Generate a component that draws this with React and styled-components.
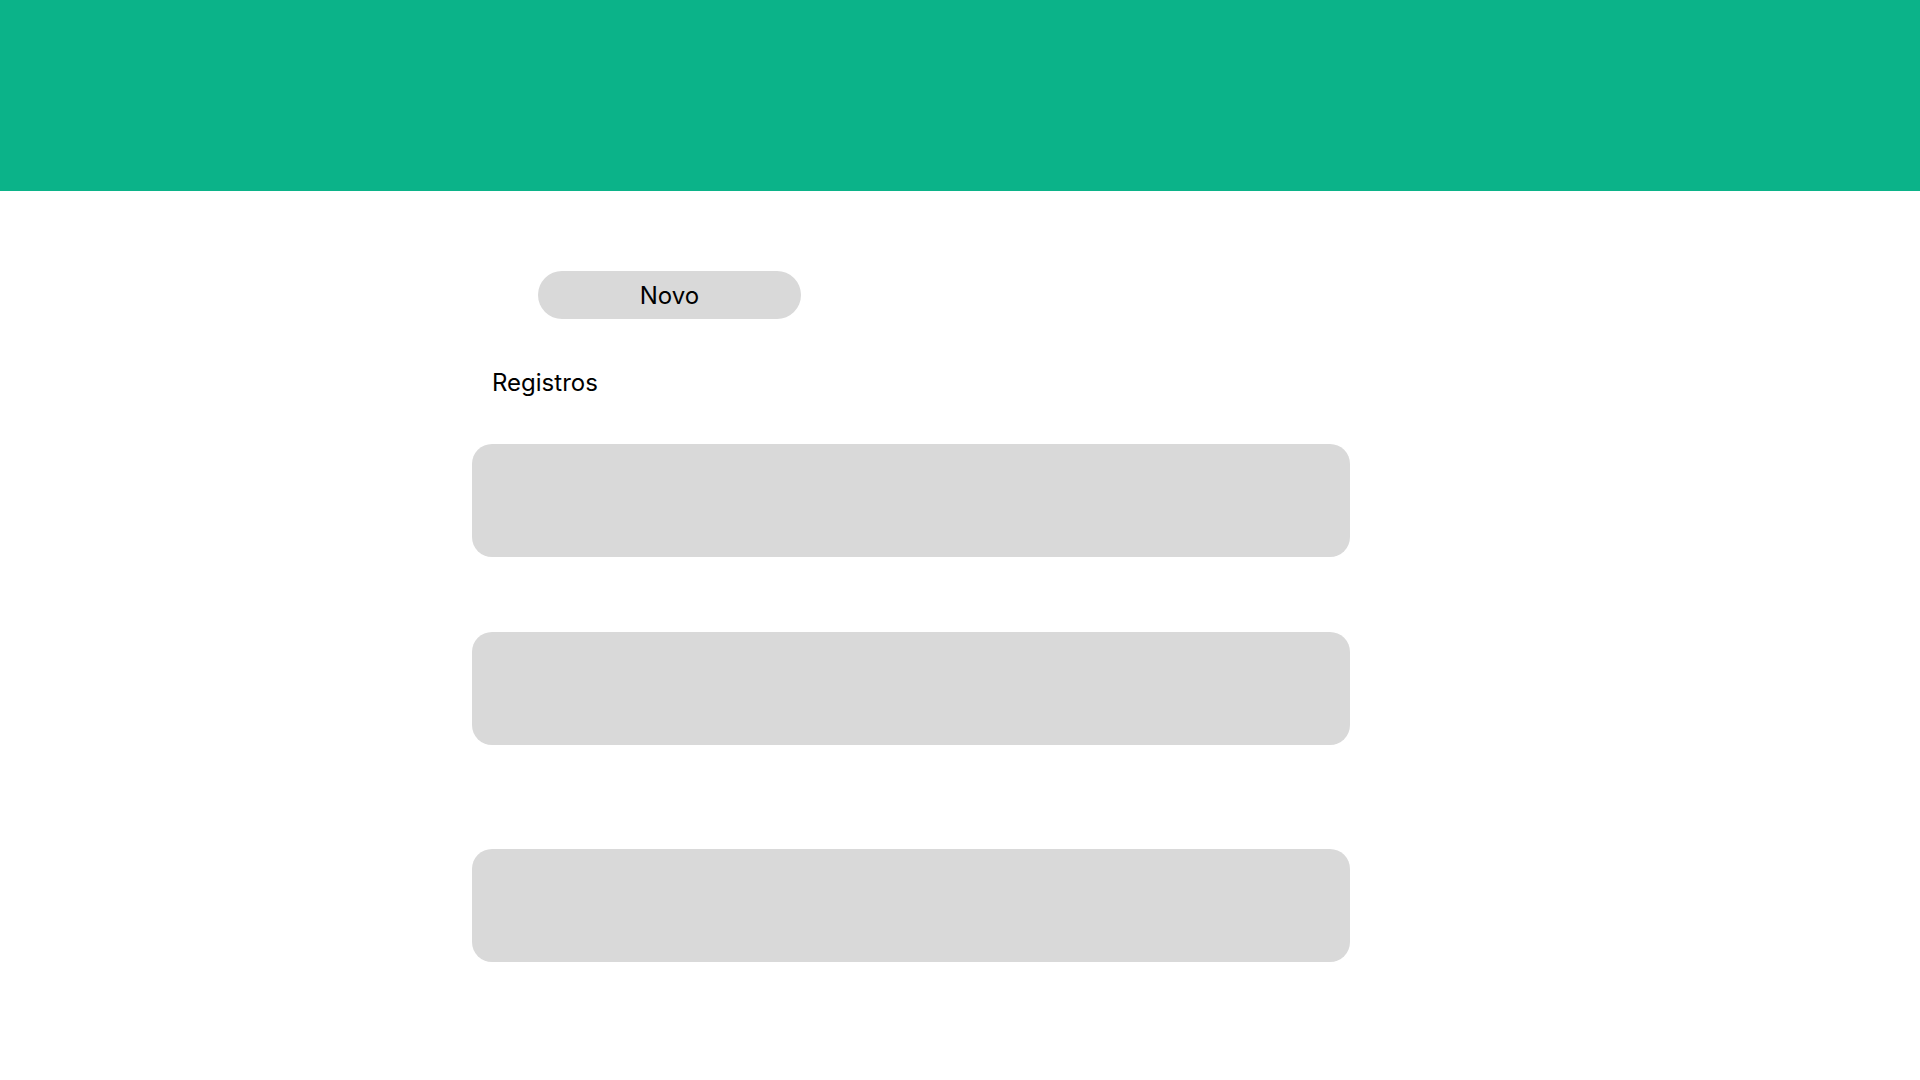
import styled, { createGlobalStyle } from 'styled-components'

const GlobalStyles = createGlobalStyle`
  * { box-sizing: border-box; }
  body {
    margin: 0;
    background: #ffffff;
    font-family: Inter, "Noto Sans", sans-serif;
    color: #000000;
  }
`

const records = [
  { id: 1, gap: 0 },
  { id: 2, gap: 75 },
  { id: 3, gap: 104 },
]

function App() {
  return (
    <Page>
      <GlobalStyles />
      <Header />
      <Main>
        <NewButton type="button">Novo</NewButton>
        <Title>Registros</Title>
        <List>
          {records.map((r) => (
            <Card key={r.id} $gap={r.gap} />
          ))}
        </List>
      </Main>
    </Page>
  )
}

export default App

const Page = styled.div`
  min-height: 100vh;
`

const Header = styled.header`
  height: 191px;
  background: #0bb389;
`

const Main = styled.main`
  width: 878px;
  margin-left: 472px;
  padding-top: 80px;
  display: flex;
  flex-direction: column;
`

const NewButton = styled.button`
  align-self: flex-start;
  margin-left: 66px;
  width: 263px;
  height: 48px;
  border: none;
  border-radius: 24px;
  background: #d9d9d9;
  font-family: Inter, "Noto Sans", sans-serif;
  font-size: 24px;
  color: #000000;
  cursor: pointer;
`

const Title = styled.h2`
  margin: 49px 0 0 20px;
  font-size: 24px;
  font-weight: 400;
  line-height: normal;
`

const List = styled.div`
  margin-top: 47px;
  display: flex;
  flex-direction: column;
`

const Card = styled.div`
  height: 113px;
  margin-top: ${(p) => p.$gap}px;
  border-radius: 20px;
  background: #d9d9d9;
`
